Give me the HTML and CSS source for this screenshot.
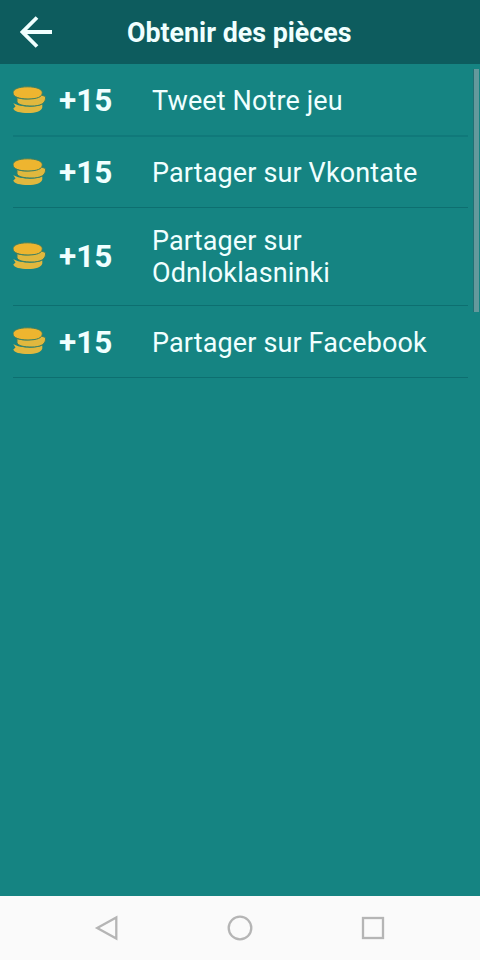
FILE: index.html
```html
<!DOCTYPE html>
<html lang="fr">
<head>
<meta charset="utf-8">
<title>Obtenir des pièces</title>
<link rel="stylesheet" href="styles.css">
</head>
<body>
<svg class="defs" aria-hidden="true">
  <symbol id="coins" viewBox="0 0 33 28">
    <path class="coin coin-low" d="M0.300 17C6 21 22 22 29.300 18.500V21.500C28 25.500 23 27 15 27C7 27 1 25.500 0.300 22.500L2.500 20.500Z"/>
    <path class="coin coin-mid" d="M4 11.500C10 14 23 13 28.500 9L32.500 10.500V13C31.500 18 26.500 20 19 20C11 20 5 19 4 15.500Z"/>
    <path class="coin coin-top" d="M0 6.800C0 3 6 0.800 14.500 0.800C23 0.800 29.300 3 29.300 6.800C29.300 11 24 13 15 13C6 13 0 10.800 0 6.800Z"/>
  </symbol>
</svg>
<header class="bar">
  <svg class="back" viewBox="0 0 34 34"><path d="M32 17H3M17 2.500L2.500 17L17 31.500"/></svg>
  <h1 class="title">Obtenir des pièces</h1>
</header>
<main class="content">
  <ul class="list">
    <li class="row"><svg class="coins"><use href="#coins"/></svg><b class="amount">+15</b><span class="label">Tweet Notre jeu</span></li>
    <li class="row"><svg class="coins"><use href="#coins"/></svg><b class="amount">+15</b><span class="label">Partager sur Vkontate</span></li>
    <li class="row tall"><svg class="coins"><use href="#coins"/></svg><b class="amount">+15</b><span class="label">Partager sur<br>Odnloklasninki</span></li>
    <li class="row"><svg class="coins"><use href="#coins"/></svg><b class="amount">+15</b><span class="label">Partager sur Facebook</span></li>
  </ul>
  <div class="scrollbar"></div>
</main>
<nav class="nav">
  <svg class="key" viewBox="0 0 28 28"><path d="M23.300 3.500V24.500L4.200 14Z"/></svg>
  <svg class="key" viewBox="0 0 28 28"><circle cx="14" cy="14" r="11.300"/></svg>
  <svg class="key" viewBox="0 0 28 28"><rect x="4" y="4" width="20" height="20"/></svg>
</nav>
</body>
</html>
```

FILE: styles.css
```css
* { box-sizing: border-box; }
body {
  margin: 0;
  height: 960px;
  display: flex;
  flex-direction: column;
  background: #158482;
  color: #f0ffff;
  font-family: Roboto, sans-serif;
}
.defs { position: absolute; width: 0; height: 0; }
.bar {
  height: 64px;
  flex: none;
  display: flex;
  align-items: center;
  padding-left: 20px;
  background: #0d5c5e;
}
.back {
  width: 34px;
  height: 34px;
  fill: none;
  stroke: #f0ffff;
  stroke-width: 3.8;
}
.title {
  margin: 1px 0 0 73px;
  font-size: 26.8px;
  line-height: 32px;
  font-weight: 700;
  white-space: nowrap;
}
.content { flex: 1; display: flex; justify-content: space-between; }
.list { width: 468px; margin: 0; padding: 0 0 0 13px; list-style: none; }
.row {
  height: 71px;
  display: flex;
  align-items: center;
  padding-top: 2px;
  border-bottom: 1px solid #0d6f70;
}
.row:first-child { height: 73px; padding-top: 3px; border-bottom: 2px solid #10797a; }
.row.tall { height: 98px; padding-top: 1px; }
.row:last-child { height: 72px; }
.coins { width: 33px; height: 28px; flex: none; margin-bottom: 3px; }
.coin { fill: #e0b83e; }
.coin-top { fill: #eeb52f; }
.coin-mid, .coin-top { stroke: #3d7f62; stroke-width: 1; }
.amount { width: 93px; margin-left: 13px; font-size: 31.5px; line-height: 32px; }
.label { font-size: 27px; line-height: 32px; letter-spacing: 0.13px; white-space: nowrap; }
.scrollbar {
  width: 6px;
  height: 243px;
  margin: 5px 1px 0 0;
  background: #63999c;
  border-left: 1px solid #236f73;
}
.nav {
  height: 64px;
  flex: none;
  display: flex;
  justify-content: space-between;
  align-items: center;
  padding: 0 93px;
  background: #fafafa;
}
.key { width: 28px; height: 28px; fill: none; stroke: #b5b5b5; stroke-width: 2.3; }
```
